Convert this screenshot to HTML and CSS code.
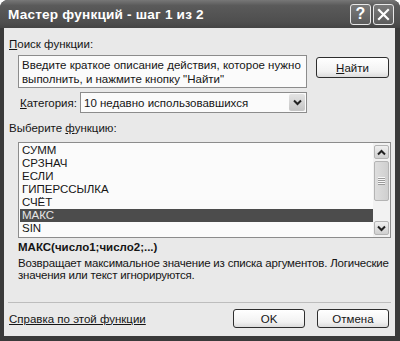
FILE: index.html
```html
<!DOCTYPE html>
<html lang="ru">
<head>
    <meta charset="UTF-8">
    <title>Мастер функций - шаг 1 из 2</title>
    <link rel="stylesheet" href="styles.css">
</head>
<body>
    <div class="window">
        <div class="titlebar">
            <span class="title">Мастер функций - шаг 1 из 2</span>
            <div class="title-buttons">
                <span class="title-btn">?</span>
                <span class="title-btn">
                    <svg width="13" height="13" viewBox="0 0 13 13">
                        <path d="M2 2 L11 11 M11 2 L2 11" stroke="#fff" stroke-width="2.2" stroke-linecap="square"/>
                    </svg>
                </span>
            </div>
        </div>
        <div class="content">
            <div class="label"><u>П</u>оиск функции:</div>
            <div class="search-row">
                <div class="search-box">Введите краткое описание действия, которое нужно выполнить, и нажмите кнопку "Найти"</div>
                <button class="btn find-btn"><u>Н</u>айти</button>
            </div>
            <div class="category-row">
                <span class="category-label"><u>К</u>атегория:</span>
                <div class="combo">
                    <span class="combo-text">10 недавно использовавшихся</span>
                    <span class="combo-arrow">
                        <svg width="9" height="7" viewBox="0 0 9 7">
                            <path d="M1 1.5 L4.5 5 L8 1.5" fill="none" stroke="#222" stroke-width="2"/>
                        </svg>
                    </span>
                </div>
            </div>
            <div class="label list-label">Выберите <u>ф</u>ункцию:</div>
            <div class="list">
                <ul class="items">
                    <li>СУММ</li>
                    <li>СРЗНАЧ</li>
                    <li>ЕСЛИ</li>
                    <li>ГИПЕРССЫЛКА</li>
                    <li>СЧЁТ</li>
                    <li class="selected">МАКС</li>
                    <li>SIN</li>
                </ul>
                <div class="scrollbar">
                    <span class="scroll-btn">
                        <svg width="9" height="7" viewBox="0 0 9 7">
                            <path d="M1 5.5 L4.5 2 L8 5.5" fill="none" stroke="#222" stroke-width="2"/>
                        </svg>
                    </span>
                    <span class="scroll-thumb"><span class="grip"></span></span>
                    <span class="scroll-space"></span>
                    <span class="scroll-btn">
                        <svg width="9" height="7" viewBox="0 0 9 7">
                            <path d="M1 1.5 L4.5 5 L8 1.5" fill="none" stroke="#222" stroke-width="2"/>
                        </svg>
                    </span>
                </div>
            </div>
            <div class="signature">МАКС(число1;число2;...)</div>
            <p class="description">Возвращает максимальное значение из списка аргументов. Логические<br>значения или текст игнорируются.</p>
            <div class="separator"></div>
            <div class="footer">
                <a class="help-link" href="#">Справка по этой функции</a>
                <div class="actions">
                    <button class="btn">OK</button>
                    <button class="btn">Отмена</button>
                </div>
            </div>
        </div>
    </div>
</body>
</html>
```

FILE: styles.css
```css
* {
    margin: 0;
    padding: 0;
    box-sizing: border-box;
}

body {
    width: 400px;
    height: 341px;
    background-color: #ffffff;
    font-family: 'Liberation Sans', Arial, sans-serif;
    font-size: 11.5px;
    color: #151515;
}

.window {
    height: 341px;
    display: flex;
    flex-direction: column;
    background-color: #3a3a3a;
    border-radius: 8px 8px 0 0;
    overflow: hidden;
}

.titlebar {
    height: 28px;
    display: flex;
    align-items: center;
    justify-content: space-between;
    padding: 0 6px 0 8px;
    background: linear-gradient(#777777, #5a5a5a 20%, #4e4e4e 80%, #444444);
    color: #ffffff;
}

.title {
    font-size: 13.6px;
    font-weight: bold;
    letter-spacing: 0.2px;
    margin-top: 1px;
}

.title-buttons {
    display: flex;
    gap: 2px;
}

.title-btn {
    width: 21px;
    height: 21px;
    display: flex;
    align-items: center;
    justify-content: center;
    border: 1px solid #e8e8e8;
    border-radius: 3px;
    background: linear-gradient(#7a7a7a, #5c5c5c);
    font-size: 16px;
    font-weight: bold;
}

.content {
    flex: 1;
    margin: 0 5px 5px 4px;
    padding: 9px 4px 0 5px;
    background-color: #e9e9e9;
    display: flex;
    flex-direction: column;
}

.label {
    line-height: 14px;
}

.search-row {
    display: flex;
    align-items: flex-start;
    gap: 9px;
    margin: 4px 0 0 9px;
}

.search-box {
    width: 289px;
    height: 33px;
    padding: 2px 3px;
    border: 1px solid #8c8c8c;
    background-color: #fbfbfb;
    line-height: 14px;
}

.btn {
    width: 72px;
    height: 19px;
    font-family: inherit;
    font-size: 11.5px;
    color: #151515;
    border: 1px solid #2e2e2e;
    border-radius: 3px;
    background: linear-gradient(#ffffff, #f2f2f2 70%, #dcdcdc);
}

.find-btn {
    width: 73px;
    height: 21px;
    margin-top: 2px;
}

.category-row {
    display: flex;
    align-items: center;
    margin: 4px 0 0 11px;
}

.category-label {
    width: 60px;
}

.combo {
    width: 227px;
    height: 21px;
    display: flex;
    align-items: center;
    justify-content: space-between;
    padding: 0 1px 0 3px;
    border: 1px solid #8c8c8c;
    background-color: #fbfbfb;
}

.combo-arrow {
    width: 16px;
    height: 17px;
    display: flex;
    align-items: center;
    justify-content: center;
    border-radius: 2px;
    background: linear-gradient(#e4e4e4, #c4c4c4);
}

.list-label {
    margin-top: 8px;
}

.list {
    height: 96px;
    margin: 7px 0 0 9px;
    display: flex;
    border: 1px solid #8c8c8c;
    background-color: #fbfbfb;
}

.items {
    flex: 1;
    list-style: none;
    padding: 1px 0 0 1px;
}

.items li {
    height: 13px;
    line-height: 13px;
    padding-left: 2px;
}

.items li.selected {
    background-color: #4c4c4c;
    color: #e6e6e6;
}

.scrollbar {
    width: 17px;
    display: flex;
    flex-direction: column;
    gap: 2px;
    padding: 2px 1px;
    background-color: #f2f2f2;
}

.scroll-btn {
    height: 14px;
    display: flex;
    align-items: center;
    justify-content: center;
    border: 1px solid #b4b4b4;
    border-radius: 2px;
    background: linear-gradient(#f0f0f0, #cfcfcf);
}

.scroll-thumb {
    height: 40px;
    display: flex;
    align-items: center;
    justify-content: center;
    border: 1px solid #b4b4b4;
    border-radius: 2px;
    background: linear-gradient(90deg, #dedede, #cfcfcf);
}

.grip {
    width: 7px;
    height: 8px;
    background: repeating-linear-gradient(#f8f8f8 0 1px, #9a9a9a 1px 2px);
}

.scroll-space {
    flex: 1;
}

.signature {
    margin: 2px 0 0 9px;
    font-weight: bold;
    line-height: 14px;
}

.description {
    margin: 3px 0 0 9px;
    letter-spacing: -0.2px;
    line-height: 12px;
    white-space: nowrap;
}

.separator {
    margin: 21px 0 0 -1px;
    border-top: 1px solid #bdbdbd;
}

.footer {
    display: flex;
    align-items: center;
    justify-content: space-between;
    margin-top: 6px;
    padding-right: 2px;
}

.help-link {
    color: #151515;
}

.actions {
    display: flex;
    gap: 12px;
}
```
